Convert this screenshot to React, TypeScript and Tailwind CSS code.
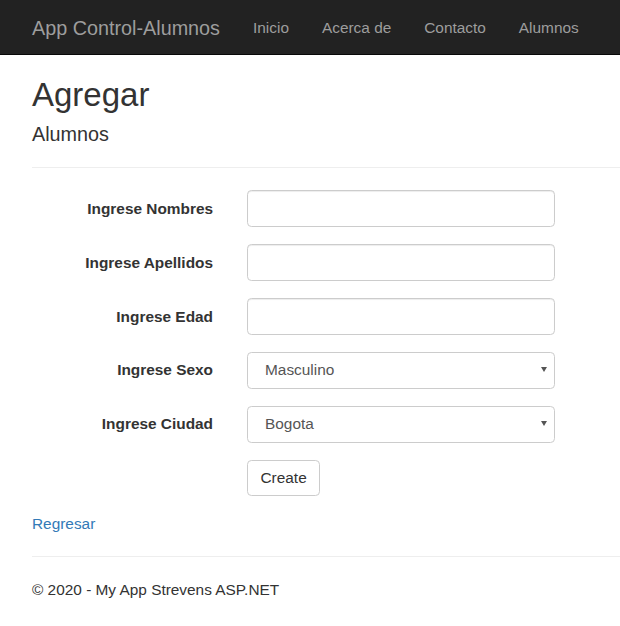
import { useState } from "react";

const links = ["Inicio", "Acerca de", "Contacto", "Alumnos"];

function Field({ label, children }: { label: string; children: React.ReactNode }) {
  return (
    <div className="mb-[16.5px] flex">
      <label className="w-[181px] shrink-0 pt-[7.7px] text-right font-bold leading-[22px] text-[#333]">{label}</label>
      <div className="ml-[34px]">{children}</div>
    </div>
  );
}

function Select({ value, options, onChange }: { value: string; options: string[]; onChange: (v: string) => void }) {
  return (
    <div className="relative w-[308px]">
      <select value={value} onChange={(e) => onChange(e.target.value)}
        className="h-[37.4px] w-full appearance-none rounded-[4.4px] border border-[#ccc] bg-white pl-[17px] pr-6 text-[15.4px] text-[#555] outline-none">
        {options.map((o) => <option key={o}>{o}</option>)}
      </select>
      <span className="pointer-events-none absolute right-[8px] top-[15px] h-0 w-0 border-x-[3.5px] border-t-[5px] border-x-transparent border-t-[#555]" />
    </div>
  );
}

export default function App() {
  const [sexo, setSexo] = useState("Masculino");
  const [ciudad, setCiudad] = useState("Bogota");
  const input = "block h-[37.4px] w-[308px] rounded-[4.4px] border border-[#ccc] bg-white px-[13px] text-[15.4px] text-[#555] shadow-[inset_0_1px_1px_rgba(0,0,0,0.075)] outline-none";

  return (
    <div className="min-h-[626px] bg-white font-['Liberation_Sans',Arial,sans-serif] text-[15.4px] leading-[22px] text-[#333]">
      <nav className="flex h-[55px] items-center border-b border-[#080808] bg-[#222] pt-[2px] pl-[32px]">
        <span className="pr-[16.5px] text-[19.8px] text-[#9d9d9d]">App Control-Alumnos</span>
        {links.map((l) => (
          <a key={l} href="#" className="px-[16.5px] text-[#9d9d9d]">{l}</a>
        ))}
      </nav>

      <div className="pl-[32px]">
        <h2 className="mt-[22px] text-[33px] font-normal leading-[36.3px]">Agregar</h2>
        <h4 className="mt-[11px] text-[19.8px] font-normal leading-[21.8px]">Alumnos</h4>
        <hr className="mt-[21px] mb-[22px] border-t border-[#eee]" />

        <form onSubmit={(e) => e.preventDefault()}>
          <Field label="Ingrese Nombres"><input className={input} /></Field>
          <Field label="Ingrese Apellidos"><input className={input} /></Field>
          <Field label="Ingrese Edad"><input className={input} /></Field>
          <Field label="Ingrese Sexo">
            <Select value={sexo} options={["Masculino", "Femenino"]} onChange={setSexo} />
          </Field>
          <Field label="Ingrese Ciudad">
            <Select value={ciudad} options={["Bogota", "Medellin", "Cali"]} onChange={setCiudad} />
          </Field>
          <div className="mb-[17px] ml-[215px]">
            <button className="h-[36px] rounded-[4.4px] border border-[#ccc] bg-white px-[12.5px] text-[15.4px] text-[#333]">Create</button>
          </div>
        </form>

        <div>
          <a href="#" className="text-[#337ab7]">Regresar</a>
        </div>
        <hr className="mt-[21.5px] mb-[22px] border-t border-[#eee]" />
        <footer>
          <p>© 2020 - My App Strevens ASP.NET</p>
        </footer>
      </div>
    </div>
  );
}
